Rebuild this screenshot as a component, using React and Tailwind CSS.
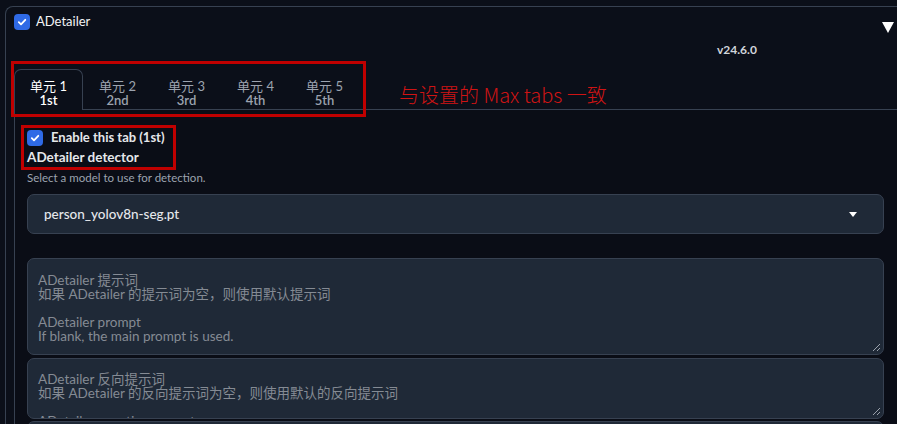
import React from 'react';

const font = { fontFamily: "Lato, 'Noto Sans CJK SC', sans-serif" };

const Check = ({ size = 16 }) => (
  <div
    className="flex items-center justify-center rounded-[4px] bg-[#2f6ae6] shrink-0"
    style={{ width: size, height: size }}
  >
    <svg width="10" height="10" viewBox="0 0 10 10" fill="none">
      <path d="M1.8 5.2 L4 7.3 L8.3 2.8" stroke="white" strokeWidth="1.8" strokeLinecap="round" strokeLinejoin="round" />
    </svg>
  </div>
);

const Grip = () => (
  <svg className="absolute right-[2px] bottom-[2px]" width="9" height="9" viewBox="0 0 9 9">
    <path d="M1 8 L8 1 M5 8 L8 5" stroke="#9aa1ab" strokeWidth="1" />
  </svg>
);

const tabs = [
  ['单元 1', '1st'],
  ['单元 2', '2nd'],
  ['单元 3', '3rd'],
  ['单元 4', '4th'],
  ['单元 5', '5th'],
];

export default function App() {
  return (
    <div className="relative w-full h-screen overflow-hidden bg-[#0b0f19]" style={font}>
      {/* outer accordion panel */}
      <div className="ml-[5px] mt-[6px] w-[900px] border-l border-t border-[#374151] rounded-tl-[8px] pl-[8px] pt-[7px]">
        <div className="flex items-center h-4">
          <Check />
          <span className="ml-[6px] text-[13px] font-normal text-[#f3f4f6]">ADetailer</span>
          <div className="flex-1" />
          <svg className="mr-[11px] mt-[10px]" width="12" height="11" viewBox="0 0 12 11">
            <polygon points="0,0 12,0 6,11" fill="white" />
          </svg>
        </div>

        <div className="mt-[12px] h-4 pl-[703px] text-[12px] leading-4 font-bold text-[#d1d5db]">v24.6.0</div>

        {/* tabs */}
        <div className="mt-[11px] flex">
          {tabs.map(([a, b], i) =>
            i === 0 ? (
              <div
                key={a}
                className="w-[69px] h-[41px] border-l border-r border-t border-[#374151] rounded-t-[7px] flex flex-col items-center pt-[9px] text-[13px] leading-[14px] text-white"
              >
                <span>{a}</span>
                <span className="font-semibold">{b}</span>
              </div>
            ) : (
              <div
                key={a}
                className="w-[69px] h-[41px] border-b border-[#374151] flex flex-col items-center pt-[10px] text-[13px] leading-[14px] text-[#9ca3af]"
              >
                <span>{a}</span>
                <span className="font-semibold">{b}</span>
              </div>
            )
          )}
          <div className="flex-1 h-[41px] border-b border-[#374151]" />
        </div>

        {/* tab content */}
        <div className="border-l border-[#374151] pl-[12px] pt-[20px] h-[330px] bg-[#0a0d16]">
          <div className="flex items-center h-4">
            <Check />
            <span className="ml-[8px] text-[13px] font-bold text-[#e5e7eb]">Enable this tab (1st)</span>
          </div>
          <div className="mt-[2px] text-[13.5px] leading-[18px] font-bold text-[#e5e7eb]">ADetailer detector</div>
          <div className="mt-[4px] text-[11.5px] leading-4 text-[#9ca3af]">Select a model to use for detection.</div>

          <div className="mt-[8px] w-[857px] h-[40px] rounded-[7px] border border-[#374151] bg-[#1f2937] flex items-center pl-[16px] pr-[26px]">
            <span className="text-[13.5px] text-[#e5e7eb] font-medium">person_yolov8n-seg.pt</span>
            <div className="flex-1" />
            <svg width="8" height="5" viewBox="0 0 8 5">
              <polygon points="0,0 8,0 4,5" fill="white" />
            </svg>
          </div>

          <div className="relative mt-[24px] w-[857px] h-[97px] rounded-[7px] border border-[#374151] bg-[#1f2937] pl-[10px] pt-[14px] text-[13.5px] leading-[14px] text-[#858b94]">
            <div>ADetailer 提示词</div>
            <div>如果 ADetailer 的提示词为空，则使用默认提示词</div>
            <div className="h-[14px]" />
            <div>ADetailer prompt</div>
            <div>If blank, the main prompt is used.</div>
            <Grip />
          </div>

          <div className="relative mt-[3px] w-[857px] h-[61px] rounded-[7px] border border-[#374151] bg-[#1f2937] pl-[10px] pt-[13px] text-[13.5px] leading-[14px] text-[#858b94] overflow-hidden">
            <div>ADetailer 反向提示词</div>
            <div>如果 ADetailer 的反向提示词为空，则使用默认的反向提示词</div>
            <div className="h-[14px]" />
            <div>ADetailer negative prompt</div>
            <Grip />
          </div>

          <div className="mt-[2px] w-[857px] h-[40px] rounded-t-[7px] border border-[#374151] bg-[#1f2937]" />
        </div>
      </div>

      {/* annotations */}
      <div className="absolute left-[11px] top-[61px] w-[355px] h-[56px] border-[3px] border-[#c00000]" />
      <div className="absolute left-[21px] top-[125px] w-[155px] h-[45px] border-[3px] border-[#c00000]" />
      <div
        className="absolute left-[399px] top-[82px] text-[20px] leading-[26px] text-[#d01414]"
        style={{ fontFamily: "'Noto Sans CJK SC', 'Noto Sans', sans-serif", fontWeight: 300 }}
      >
        与设置的 Max tabs 一致
      </div>
    </div>
  );
}
